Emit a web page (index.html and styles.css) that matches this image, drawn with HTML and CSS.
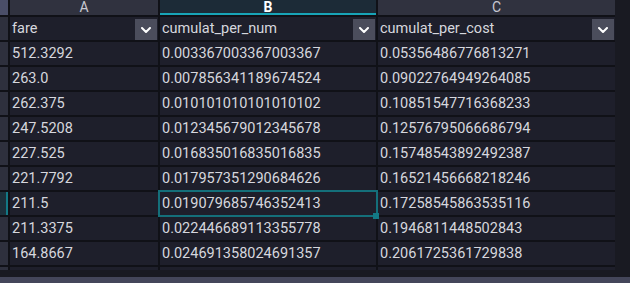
FILE: index.html
```html
<!DOCTYPE html>
<html>
<head>
<meta charset="utf-8">
<link rel="stylesheet" href="styles.css">
</head>
<body>
<div class="app">
  <div class="viewport">
    <div class="sheet">
      <div class="corner"></div>
      <div class="colhead">A</div>
      <div class="colhead active">B</div>
      <div class="colhead">C</div>

      <div class="rowhead"></div>
      <div class="cell filter"><span>fare</span><span class="dd"><svg width="10" height="6" viewBox="0 0 10 6"><path d="M1 1 L5 5 L9 1" fill="none" stroke="#fff" stroke-width="2" stroke-linecap="round" stroke-linejoin="round"/></svg></span></div>
      <div class="cell filter"><span>cumulat_per_num</span><span class="dd"><svg width="10" height="6" viewBox="0 0 10 6"><path d="M1 1 L5 5 L9 1" fill="none" stroke="#fff" stroke-width="2" stroke-linecap="round" stroke-linejoin="round"/></svg></span></div>
      <div class="cell filter"><span>cumulat_per_cost</span><span class="dd"><svg width="10" height="6" viewBox="0 0 10 6"><path d="M1 1 L5 5 L9 1" fill="none" stroke="#fff" stroke-width="2" stroke-linecap="round" stroke-linejoin="round"/></svg></span></div>

      <div class="rowhead"></div><div class="cell">512.3292</div><div class="cell">0.003367003367003367</div><div class="cell">0.05356486776813271</div>
      <div class="rowhead"></div><div class="cell">263.0</div><div class="cell">0.007856341189674524</div><div class="cell">0.09022764949264085</div>
      <div class="rowhead"></div><div class="cell">262.375</div><div class="cell">0.010101010101010102</div><div class="cell">0.10851547716368233</div>
      <div class="rowhead"></div><div class="cell">247.5208</div><div class="cell">0.012345679012345678</div><div class="cell">0.12576795066686794</div>
      <div class="rowhead"></div><div class="cell">227.525</div><div class="cell">0.016835016835016835</div><div class="cell">0.15748543892492387</div>
      <div class="rowhead"></div><div class="cell">221.7792</div><div class="cell">0.017957351290684626</div><div class="cell">0.16521456668218246</div>
      <div class="rowhead active"></div><div class="cell">211.5</div><div class="cell selected">0.019079685746352413</div><div class="cell">0.17258545863535116</div>
      <div class="rowhead"></div><div class="cell">211.3375</div><div class="cell">0.022446689113355778</div><div class="cell">0.1946811448502843</div>
      <div class="rowhead"></div><div class="cell">164.8667</div><div class="cell">0.024691358024691357</div><div class="cell">0.2061725361729838</div>
      <div class="rowhead"></div><div class="cell"></div><div class="cell"></div><div class="cell"></div>
    </div>
    <div class="vstrip"></div>
  </div>
  <div class="gapband"></div>
  <div class="hscroll"></div>
</div>
</body>
</html>
```
FILE: styles.css
```css
html, body {
  margin: 0;
  padding: 0;
  background: #191a22;
}
.app {
  width: 630px;
  height: 283px;
  display: flex;
  flex-direction: column;
  font-family: Roboto, "Liberation Sans", sans-serif;
  overflow: hidden;
}
.viewport {
  height: 270px;
  display: flex;
  overflow: hidden;
  flex: none;
}
.sheet {
  width: 615px;
  display: grid;
  grid-template-columns: 8px 148px 216px 237px;
  grid-template-rows: 15px;
  grid-auto-rows: 23px;
  column-gap: 2px;
  row-gap: 2px;
  background: #101117;
  align-content: start;
  flex: none;
}
.vstrip {
  flex: 1;
  background: #191a22;
}
.gapband {
  height: 7px;
  background: #191a22;
  flex: none;
}
.hscroll {
  height: 6px;
  background: #44465a;
  flex: none;
}
.corner {
  background: #4a4e68;
}
.colhead {
  background: #30323f;
  color: #c8c9d2;
  font-size: 14px;
  line-height: 15px;
  text-align: center;
}
.colhead.active {
  background: #1c2b37;
  color: #ffffff;
  font-weight: 700;
  box-shadow: inset 0 -2px 0 #18a4b7;
}
.rowhead {
  background: #2e303d;
}
.rowhead.active {
  background: #1c303b;
  box-shadow: inset -2px 0 0 #137985;
}
.cell {
  background: #1e1f2b;
  color: #d6d7de;
  font-size: 14.5px;
  line-height: 23px;
  padding-left: 2px;
  white-space: nowrap;
  overflow: hidden;
}
.cell.filter {
  display: flex;
  justify-content: space-between;
  align-items: flex-end;
  padding-right: 1px;
}
.cell.filter span:first-child {
  align-self: center;
}
.dd {
  width: 22px;
  height: 21px;
  background: #4b4d5c;
  display: flex;
  align-items: center;
  justify-content: center;
}
.dd svg {
  display: block;
}
.cell.selected {
  position: relative;
  overflow: visible;
  outline: 2px solid #146f7a;
}
.cell.selected::after {
  content: "";
  position: absolute;
  right: -3px;
  bottom: -4px;
  width: 6px;
  height: 6px;
  background: #137985;
}
```
